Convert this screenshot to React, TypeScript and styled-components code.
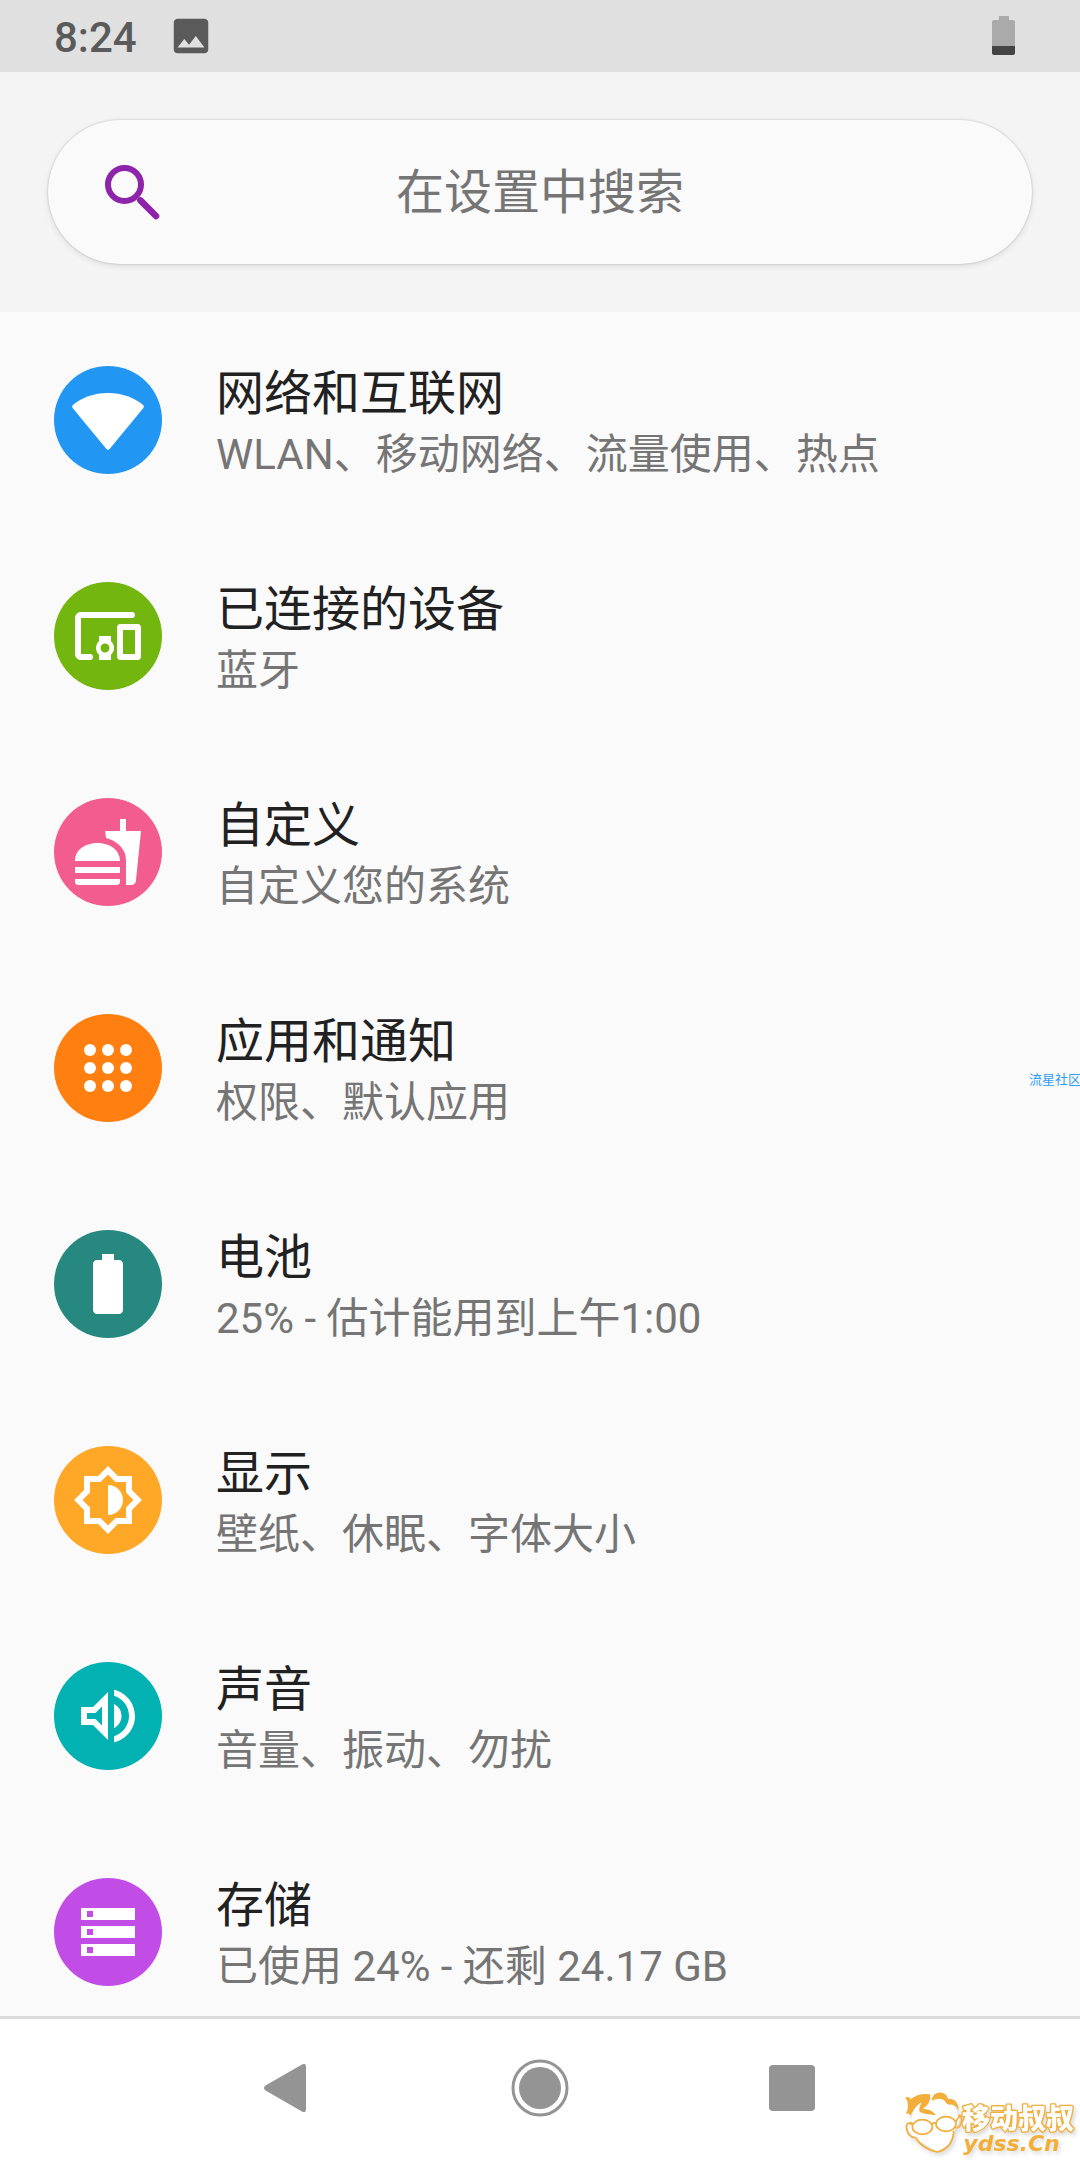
import React from "react";
import styled, { createGlobalStyle } from "styled-components";

const GlobalStyle = createGlobalStyle`
  * { box-sizing: border-box; }
  body { margin: 0; background: #fafafa; }
  body, button, input { font-family: Roboto, "Noto Sans CJK SC", sans-serif; }
`;

const Screen = styled.div`
  display: flex;
  flex-direction: column;
  height: 100vh;
  position: relative;
  overflow: hidden;
`;

const StatusBar = styled.header`
  flex: none;
  display: flex;
  align-items: center;
  height: 72px;
  padding: 0 64px 0 54px;
  background: #e0e0e0;
`;

const Clock = styled.time`
  margin-right: 31px;
  padding-top: 4px;
  color: #5a5a5a;
  font-size: 42px;
  font-weight: 500;
  line-height: 56px;
`;

const StatusIcon = styled.svg<{ $push?: boolean }>`
  display: block;
  flex: none;
  margin-left: ${(p) => (p.$push ? "auto" : "0")};
`;

const SearchArea = styled.div`
  flex: none;
  padding: 48px;
  background: #f4f4f4;
`;

const SearchBar = styled.label`
  display: grid;
  grid-template-columns: 72px 1fr 72px;
  align-items: center;
  height: 144px;
  padding: 0 48px;
  border-radius: 72px;
  background: #fafafa;
  box-shadow: 0 0 2px rgba(0, 0, 0, 0.24), 0 2px 6px rgba(0, 0, 0, 0.1);
`;

const SearchInput = styled.input`
  width: 100%;
  height: 72px;
  padding: 0;
  border: 0;
  outline: 0;
  background: transparent;
  color: #212121;
  font-size: 48px;
  text-align: center;
  &::placeholder { color: #757575; opacity: 1; }
`;

const List = styled.ul`
  flex: 1;
  min-height: 0;
  margin: 0;
  padding: 0;
  list-style: none;
  overflow-y: auto;
  scrollbar-width: none;
`;

const Row = styled.button`
  display: flex;
  align-items: center;
  gap: 54px;
  width: 100%;
  height: 216px;
  padding: 0 54px;
  border: 0;
  background: transparent;
  text-align: left;
`;

const Badge = styled.span<{ $color: string }>`
  flex: none;
  display: grid;
  place-items: center;
  width: 108px;
  height: 108px;
  border-radius: 50%;
  background: ${(p) => p.$color};
`;

const Texts = styled.span`
  display: flex;
  flex-direction: column;
  min-width: 0;
  padding-top: 6px;
`;

const Title = styled.span`
  color: #212121;
  font-size: 48px;
  line-height: 64px;
`;

const Summary = styled.span`
  color: #757575;
  font-size: 42px;
  line-height: 58px;
`;

const NavBar = styled.nav`
  flex: none;
  display: flex;
  height: 144px;
  padding: 0 15% 3px;
  border-top: 3px solid #dcdcdc;
  background: #fff;
`;

const NavButton = styled.button`
  flex: 1;
  display: grid;
  place-items: center;
  padding: 0;
  border: 0;
  background: transparent;
`;

const SideMark = styled.span`
  position: absolute;
  right: 0;
  top: 50%;
  width: 51px;
  overflow: hidden;
  color: #2f9df4;
  font-size: 13px;
  line-height: 16px;
  white-space: nowrap;
  transform: translateY(-50%);
`;

const SiteLogo = styled.svg`
  position: absolute;
  right: 0;
  bottom: 0;
  filter: drop-shadow(2px 3px 2px rgba(0, 0, 0, 0.14));
`;

const LogoName = styled.text`
  fill: #fff;
  stroke: #f0ae3c;
  stroke-width: 8px;
  stroke-linejoin: round;
  paint-order: stroke;
  font: 900 84px "Noto Sans CJK SC", sans-serif;
`;

const LogoSite = styled.text`
  fill: #f2ae38;
  font: italic 700 66px "DejaVu Sans", sans-serif;
`;

const Icon = ({ children, fill = "#fff" }: { children: React.ReactNode; fill?: string }) => (
  <svg width="72" height="72" viewBox="0 0 24 24" fill={fill} aria-hidden="true">
    {children}
  </svg>
);

const items = [
  {
    title: "网络和互联网",
    summary: "WLAN、移动网络、流量使用、热点",
    color: "#2196f3",
    icon: <path d="M12 3C7.2 3 3.2 4.6.4 6.9q-.6.5-.2 1.1L11.4 21.6q.6.7 1.2 0L23.8 8q.4-.6-.2-1.1C20.8 4.6 16.8 3 12 3z" />,
  },
  {
    title: "已连接的设备",
    summary: "蓝牙",
    color: "#73b60f",
    icon: (
      <path d="M3 6h17a1 1 0 0 0 0-2H3c-1.1 0-2 .9-2 2v12c0 1.1.9 2 2 2h3a1 1 0 0 0 0-2H3V6zm10 6H9v1.78c-.61.55-1 1.33-1 2.22s.39 1.67 1 2.22V20h4v-1.78c.61-.55 1-1.34 1-2.22s-.39-1.67-1-2.22V12zm-2 5.5c-.83 0-1.5-.67-1.5-1.5s.67-1.5 1.5-1.5 1.5.67 1.5 1.5-.67 1.5-1.5 1.5zM22 8h-6c-.5 0-1 .5-1 1v10c0 .5.5 1 1 1h6c.5 0 1-.5 1-1V9c0-.5-.5-1-1-1zm-1 10h-4v-8h4v8z" />
    ),
  },
  {
    title: "自定义",
    summary: "自定义您的系统",
    color: "#f35c8f",
    icon: (
      <path d="M18 23h1.6c.9 0 1.6-.4 1.7-1.3L23 5h-5V1h-2v4h-4.95l.3 2.34c1.71.47 3.31 1.32 4.27 2.26C17.06 11.02 18 12.49 18 14.9V23zM1 22v-1h15v1c0 .55-.45 1-1 1H2c-.55 0-1-.45-1-1zm15-7c0-8-15-8-15 0h15zM1 17h15v2H1z" />
    ),
  },
  {
    title: "应用和通知",
    summary: "权限、默认应用",
    color: "#ff7f11",
    icon: [6, 12, 18].flatMap((y) => [6, 12, 18].map((x) => <circle key={`${x}-${y}`} cx={x} cy={y} r="2" />)),
  },
  {
    title: "电池",
    summary: "25% - 估计能用到上午1:00",
    color: "#26887f",
    icon: (
      <path d="M15.67 4H14V2h-4v2H8.33C7.6 4 7 4.6 7 5.33v15.33C7 21.4 7.6 22 8.33 22h7.33c.74 0 1.34-.6 1.34-1.33V5.33C17 4.6 16.4 4 15.67 4z" />
    ),
  },
  {
    title: "显示",
    summary: "壁纸、休眠、字体大小",
    color: "#ffa828",
    icon: (
      <path
        fillRule="evenodd"
        d="M20 8.69V4h-4.69L12 .69 8.69 4H4v4.69L.69 12 4 15.31V20h4.69L12 23.31 15.31 20H20v-4.69L23.31 12 20 8.69zm-2 5.79V18h-3.52L12 20.48 9.52 18H6v-3.52L3.52 12 6 9.52V6h3.52L12 3.52 14.48 6H18v3.52L20.48 12 18 14.48zM12 7v10c2.76 0 5-2.24 5-5s-2.24-5-5-5z"
      />
    ),
  },
  {
    title: "声音",
    summary: "音量、振动、勿扰",
    color: "#02b2b2",
    icon: (
      <path
        fillRule="evenodd"
        d="M3 9v6h4l5 5V4L7 9H3zm7-.17v6.34L7.83 13H5v-2h2.83L10 8.83zM16.5 12A4.5 4.5 0 0 0 14 7.97v8.05c1.48-.73 2.5-2.25 2.5-4.02zM14 3.23v2.06c2.89.86 5 3.54 5 6.71s-2.11 5.85-5 6.71v2.06c4.01-.91 7-4.49 7-8.77s-2.99-7.86-7-8.77z"
      />
    ),
  },
  {
    title: "存储",
    summary: "已使用 24% - 还剩 24.17 GB",
    color: "#c14de6",
    icon: (
      <path fillRule="evenodd" d="M3 4h18v4H3zM5 5v2h2V5zM3 10h18v4H3zM5 11v2h2v-2zM3 16h18v4H3zM5 17v2h2v-2z" />
    ),
  },
];

export default function App() {
  return (
    <Screen>
      <GlobalStyle />
      <StatusBar>
        <Clock>8:24</Clock>
        <StatusIcon width="46" height="46" viewBox="0 0 24 24" fill="#5a5a5a" aria-hidden="true">
          <path d="M21 19V5c0-1.1-.9-2-2-2H5c-1.1 0-2 .9-2 2v14c0 1.1.9 2 2 2h14c1.1 0 2-.9 2-2zM8.5 13.5l2.5 3.01L14.5 12l4.5 6H5l3.5-4.5z" />
        </StatusIcon>
        <StatusIcon $push width="24" height="40" viewBox="0 0 24 40" aria-hidden="true">
          <path d="M7 0h10v4h4q2 0 2 2v24H0V6q0-2 2-2h5z" fill="#aaa" />
          <path d="M0 30h23v7q0 2-2 2H2q-2 0-2-2z" fill="#444" />
        </StatusIcon>
      </StatusBar>

      <SearchArea>
        <SearchBar>
          <Icon fill="none">
            <circle cx="9.5" cy="9.5" r="5.5" stroke="#8e24aa" strokeWidth="2" />
            <path d="M14.8 14.8l5.2 5.2" stroke="#8e24aa" strokeWidth="2.2" strokeLinecap="round" />
          </Icon>
          <SearchInput type="text" placeholder="在设置中搜索" aria-label="在设置中搜索" />
        </SearchBar>
      </SearchArea>

      <List>
        {items.map((item) => (
          <li key={item.title}>
            <Row type="button">
              <Badge $color={item.color}>
                <Icon>{item.icon}</Icon>
              </Badge>
              <Texts>
                <Title>{item.title}</Title>
                <Summary>{item.summary}</Summary>
              </Texts>
            </Row>
          </li>
        ))}
      </List>

      <NavBar>
        <NavButton type="button" aria-label="返回">
          <svg width="48" height="48" viewBox="0 0 48 48" fill="#949494" aria-hidden="true">
            <path d="M1.5 21.5 38 .6q4-2 4 2.2v42.400q0 4.200-4 2.200L1.500 26.500q-3-2.500 0-5z" />
          </svg>
        </NavButton>
        <NavButton type="button" aria-label="主屏幕">
          <svg width="58" height="58" viewBox="0 0 58 58" aria-hidden="true">
            <circle cx="29" cy="29" r="27" fill="none" stroke="#949494" strokeWidth="3" />
            <circle cx="29" cy="29" r="21" fill="#949494" />
          </svg>
        </NavButton>
        <NavButton type="button" aria-label="最近任务">
          <svg width="46" height="46" viewBox="0 0 46 46" aria-hidden="true">
            <rect width="46" height="46" rx="4" fill="#949494" />
          </svg>
        </NavButton>
      </NavBar>

      <SideMark>流星社区</SideMark>
      <SiteLogo width="180" height="72" viewBox="60 84 540 216" role="img" aria-label="移动叔叔 ydss.cn">
        <path d="M97 186C92 160 104 136 130 128L160 116Q200 104 226 144L240 178 222 216 212 250 172 276 130 250 98 235 84 206z" fill="#fff" />
        <g fill="#f2ae38">
          <path d="M75 114Q86 106 92 118Q116 98 150 103Q154 132 128 146Q152 146 168 165Q142 166 121 157Q112 148 126 126Q108 132 92 166Q88 160 78 160Q86 146 84 132Q82 118 75 114z" />
          <path d="M156 122C156 90 200 90 204 118C224 112 236 130 236 152Q226 130 208 134Q200 132 198 128Q186 108 156 122z" />
        </g>
        <g fill="none" stroke="#f2ae38" strokeWidth="5" strokeLinecap="round">
          <ellipse cx="127" cy="201" rx="30" ry="22" />
          <ellipse cx="198" cy="192" rx="30" ry="22" />
          <path d="M156 192Q162 187 169 190M98 193L88 190M227 186L240 166" />
          <path d="M96 189Q80 186 79 200Q82 232 108 234Q128 268 172 276Q218 264 221 214" />
          <path d="M236 166Q248 166 244 188Q240 204 228 204" />
        </g>
        <LogoName x="246" y="206">移动叔叔</LogoName>
        <LogoSite x="250" y="272">ydss.Cn</LogoSite>
      </SiteLogo>
    </Screen>
  );
}
